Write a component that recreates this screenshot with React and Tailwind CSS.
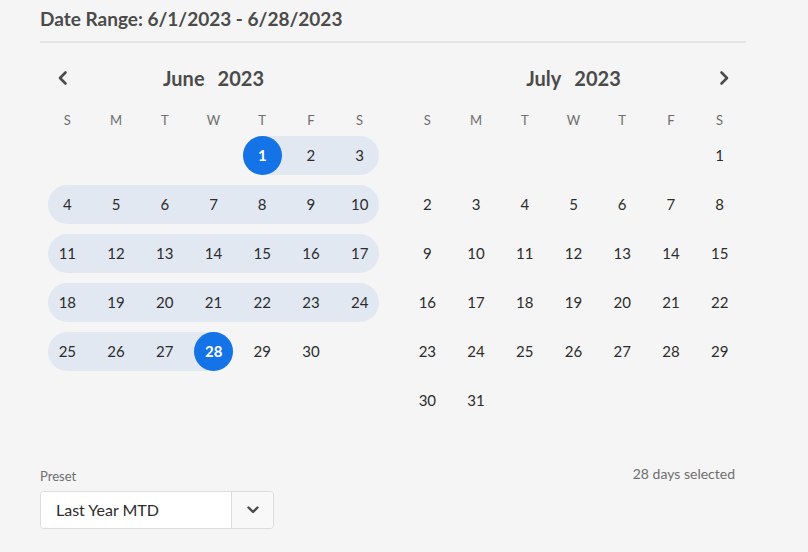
import React from 'react';

// Date range picker in Spectrum-ish styling
const DOW = ['S', 'M', 'T', 'W', 'T', 'F', 'S'];

const buildWeeks = (firstDay, days) => {
  const cells = [];
  for (let i = 0; i < firstDay; i++) cells.push(null);
  for (let d = 1; d <= days; d++) cells.push(d);
  while (cells.length % 7) cells.push(null);
  const weeks = [];
  for (let i = 0; i < cells.length; i += 7) weeks.push(cells.slice(i, i + 7));
  return weeks;
};

const DayCell = ({ day, col, range }) => {
  if (!day) return <div className="h-[49px]" />;
  const inRange = range && day >= range[0] && day <= range[1];
  const selected = range && (day === range[0] || day === range[1]);
  const isStart = inRange && (col === 0 || day === range[0]);
  const isEnd = inRange && (col === 6 || day === range[1]);

  let pill = '';
  if (inRange) {
    pill = 'bg-[#e1e8f2]';
    if (isStart && isEnd) pill += ' mx-[5px] rounded-full';
    else if (isStart) pill += ' ml-[5px] pr-[5px] rounded-l-full';
    else if (isEnd) pill += ' mr-[5px] pl-[5px] rounded-r-full';
  }

  return (
    <div className="h-[49px] flex items-center">
      <div className={`h-[39px] flex-1 flex items-center justify-center ${pill}`}>
        {selected ? (
          <span className="w-[39px] h-[39px] rounded-full bg-[#1473e6] text-white font-bold flex items-center justify-center">
            {day}
          </span>
        ) : (
          <span className="text-[#2c2c2c]">{day}</span>
        )}
      </div>
    </div>
  );
};

const Chevron = ({ dir }) => (
  <svg width="16" height="16" viewBox="0 0 16 16" fill="none" stroke="#4b4b4b" strokeWidth="2.6" strokeLinecap="round" strokeLinejoin="round">
    {dir === 'left' ? <path d="M10.5 2.5 5 8l5.5 5.5" /> : <path d="M5.5 2.5 11 8l-5.5 5.5" />}
  </svg>
);

const Month = ({ name, year, firstDay, days, range, nav }) => {
  const weeks = buildWeeks(firstDay, days);
  return (
    <div className="w-[341px]">
      <div className="h-[38px] flex items-center justify-between">
        <div className="w-[40px] flex justify-center">
          {nav === 'prev' && <Chevron dir="left" />}
        </div>
        <div className="flex gap-[13px] text-[20px] font-bold text-[#4b4b4b]">
          <span>{name}</span>
          <span>{year}</span>
        </div>
        <div className="w-[40px] flex justify-center">
          {nav === 'next' && <Chevron dir="right" />}
        </div>
      </div>
      <div className="grid grid-cols-7 h-[20px] mt-[14px] items-center text-[13px] text-[#6e6e6e]">
        {DOW.map((d, i) => (
          <span key={i} className="text-center">{d}</span>
        ))}
      </div>
      <div className="text-[15px]">
        {weeks.map((week, w) => (
          <div key={w} className="grid grid-cols-7">
            {week.map((day, c) => (
              <DayCell key={c} day={day} col={c} range={range} />
            ))}
          </div>
        ))}
      </div>
    </div>
  );
};

export default function App() {
  return (
    <div className="w-[808px] h-[552px] bg-[#f5f5f5] font-['Lato',sans-serif] overflow-hidden">
      <div className="ml-10 w-[706px]">
        <h2 className="h-[41px] pt-[5px] text-[19px] leading-[28px] font-bold text-[#4b4b4b]">
          Date Range: 6/1/2023 - 6/28/2023
        </h2>
        <div className="h-[2px] bg-[#e4e4e4]" />

        <div className="flex gap-[19px] ml-[3px] mt-[16px] h-[368px]">
          <Month name="June" year="2023" firstDay={4} days={30} range={[1, 28]} nav="prev" />
          <Month name="July" year="2023" firstDay={6} days={31} nav="next" />
        </div>

        <div className="mt-[40px] flex justify-between pr-[11px]">
          <div>
            <label className="block text-[13px] leading-[18px] text-[#6e6e6e]">Preset</label>
            <div className="mt-[6px] w-[234px] h-[38px] flex border border-[#dcdcdc] rounded-[4px] overflow-hidden">
              <div className="flex-1 bg-white flex items-center pl-[15px] text-[16px] text-[#2c2c2c]">
                Last Year MTD
              </div>
              <button className="w-[42px] bg-[#f8f8f8] border-l border-[#dcdcdc] flex items-center justify-center">
                <svg width="12" height="8" viewBox="0 0 12 8" fill="none" stroke="#4b4b4b" strokeWidth="2.4" strokeLinecap="round" strokeLinejoin="round">
                  <path d="M1.5 1.5 6 6l4.5-4.5" />
                </svg>
              </button>
            </div>
          </div>
          <span className="-mt-[2px] text-[14px] leading-[18px] text-[#6e6e6e]">28 days selected</span>
        </div>
      </div>
    </div>
  );
}
